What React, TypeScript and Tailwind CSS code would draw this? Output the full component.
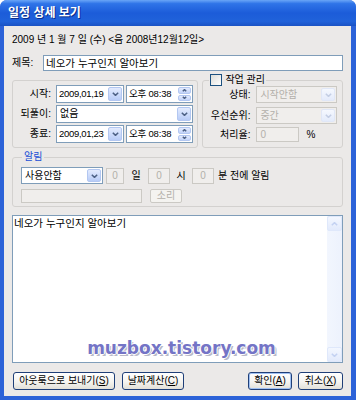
import React from "react";

// XP 스타일 일정 상세 보기 대화상자

function Chevron({ up = false, color = "#4d6185", w = 7, h = 4 }: { up?: boolean; color?: string; w?: number; h?: number }) {
  const pts = up
    ? `0.8,${h - 0.8} ${w / 2},0.6 ${w - 0.8},${h - 0.8}`
    : `0.8,0.8 ${w / 2},${h - 0.6} ${w - 0.8},0.8`;
  return (
    <svg width={w} height={h} viewBox={`0 0 ${w} ${h}`}>
      <polyline points={pts} fill="none" stroke={color} strokeWidth="1.5" />
    </svg>
  );
}

function DropBtn({ disabled = false }: { disabled?: boolean }) {
  return (
    <div
      className={
        disabled
          ? "m-[1px] flex w-[14px] items-center justify-center rounded-[2px] border border-[#e0e7f7] bg-gradient-to-b from-[#f5f8fe] to-[#e4ebfb]"
          : "m-[1px] flex w-[14px] items-center justify-center rounded-[2px] border border-[#b3c7f1] bg-gradient-to-b from-[#e3ebfe] to-[#b8ccf7]"
      }
    >
      <Chevron color={disabled ? "#c4cee4" : "#4d6185"} />
    </div>
  );
}

function Spin() {
  return (
    <div className="m-[1px] flex w-[13px] flex-col gap-[1px]">
      <div className="flex flex-1 items-center justify-center rounded-[2px] border border-[#b3c7f1] bg-gradient-to-b from-[#e3ebfe] to-[#c2d3f8]">
        <Chevron up w={5} h={3} />
      </div>
      <div className="flex flex-1 items-center justify-center rounded-[2px] border border-[#b3c7f1] bg-gradient-to-b from-[#e3ebfe] to-[#c2d3f8]">
        <Chevron w={5} h={3} />
      </div>
    </div>
  );
}

function Combo({ text, w, disabled = false, num = false }: { text: string; w: string; disabled?: boolean; num?: boolean }) {
  return (
    <div
      className={
        disabled
          ? `flex h-full border border-[#cbc9c4] bg-[#f0eeec] ${w}`
          : `flex h-full border border-[#7f9db9] bg-white ${w}`
      }
    >
      <div
        className={
          disabled
            ? "flex flex-1 items-center pl-[3px] text-[#b3b0aa]"
            : num
              ? "flex flex-1 items-center pl-[2px] text-[9.5px] tracking-[-0.3px]"
              : "flex flex-1 items-center pl-[3px]"
        }
      >
        {text}
      </div>
      <DropBtn disabled={disabled} />
    </div>
  );
}

function TimeBox({ text }: { text: string }) {
  return (
    <div className="ml-[2px] flex h-full w-[67px] border border-[#7f9db9] bg-white">
      <div className="flex flex-1 items-center pl-[2px] text-[9.5px] tracking-[-0.2px]">{text}</div>
      <Spin />
    </div>
  );
}

function OffBox({ w, text = "" }: { w: string; text?: string }) {
  return (
    <div className={`flex h-full items-center justify-center border border-[#cbc9c4] bg-[#f0eeec] text-[#b3b0aa] ${w}`}>{text}</div>
  );
}

function XPButton({ children, w, def = false }: { children: React.ReactNode; w: string; def?: boolean }) {
  return (
    <div
      className={
        def
          ? `flex h-full items-center justify-center rounded-[3px] border border-[#1f3f78] bg-[linear-gradient(180deg,#ffffff_0%,#f5f4f0_55%,#e2e0d8_100%)] shadow-[inset_0_0_0_1px_#9fc0f2] ${w}`
          : `flex h-full items-center justify-center rounded-[3px] border border-[#1f3f78] bg-[linear-gradient(180deg,#ffffff_0%,#f5f4f0_55%,#e2e0d8_100%)] ${w}`
      }
    >
      {children}
    </div>
  );
}

export default function App() {
  return (
    <div className="flex h-[400px] w-[356px] flex-col overflow-hidden rounded-t-[7px] bg-[#2c62d8] font-['Liberation_Sans','Noto_Sans_CJK_KR',sans-serif] text-[10px] leading-[12px] text-black">
      {/* 제목 표시줄 */}
      <div className="flex h-[26px] items-center bg-[linear-gradient(180deg,#6aa5f7_0%,#2f74e8_14%,#1c5cd9_50%,#2062da_82%,#1a52c4_100%)] pl-[8px] text-[12px] font-bold text-white [text-shadow:1px_1px_0_#0b2e8a]">
        일정 상세 보기
      </div>

      <div className="mb-[4px] ml-[4px] mr-[5px] flex flex-1 flex-col bg-[#ebe9e8] px-[8px] pt-[7px]">
        <div className="flex h-[14px] items-center">2009 년 1 월 7 일 (수) {"<음 2008년12월12일>"}</div>

        <div className="mt-[8px] flex h-[16px] items-center">
          <div className="w-[31px]">제목:</div>
          <div className="flex h-full flex-1 items-center border border-[#7f9db9] bg-white pl-[2px] text-[10.5px]">네오가 누구인지 알아보기</div>
        </div>

        <div className="mt-[3px] flex items-start gap-[4px]">
          <fieldset className="mt-[6px] w-[187px] rounded-[3px] border border-[#d3d1cf]">
            <div className="flex flex-col gap-[2px] pb-[4px] pr-[3px] pt-[4px]">
              <div className="flex h-[18px] items-center">
                <div className="w-[38px] text-right">시작:</div>
                <div className="ml-[5px] flex h-full">
                  <Combo text="2009,01,19" w="w-[68px]" num />
                  <TimeBox text="오후 08:38" />
                </div>
              </div>
              <div className="flex h-[18px] items-center">
                <div className="w-[38px] text-right">되풀이:</div>
                <div className="ml-[5px] flex h-full">
                  <Combo text="없음" w="w-[137px]" />
                </div>
              </div>
              <div className="flex h-[18px] items-center">
                <div className="w-[38px] text-right">종료:</div>
                <div className="ml-[5px] flex h-full">
                  <Combo text="2009,01,23" w="w-[68px]" num />
                  <TimeBox text="오후 08:38" />
                </div>
              </div>
            </div>
          </fieldset>

          <fieldset className="w-[141px] rounded-[3px] border border-[#d3d1cf]">
            <legend className="ml-[6px] flex h-[12px] items-center gap-[3px] px-[1px]">
              <span className="h-[12px] w-[12px] border border-[#1c5180] bg-gradient-to-br from-[#dcdcd7] to-white" />
              <span>작업 관리</span>
            </legend>
            <div className="flex flex-col pb-[5px]">
              <div className="flex h-[17px] items-center">
                <div className="w-[47px] text-right">상태:</div>
                <div className="ml-[6px] flex h-full">
                  <Combo text="시작안함" w="w-[81px]" disabled />
                </div>
              </div>
              <div className="mt-[4px] flex h-[17px] items-center">
                <div className="w-[47px] text-right">우선순위:</div>
                <div className="ml-[6px] flex h-full">
                  <Combo text="중간" w="w-[81px]" disabled />
                </div>
              </div>
              <div className="mt-[3px] flex h-[15px] items-center">
                <div className="w-[47px] text-right">처리율:</div>
                <div className="ml-[6px] flex h-full w-[43px] items-center border border-[#cbc9c4] bg-[#f0eeec] pl-[3px] text-[#b3b0aa]">0</div>
                <div className="ml-[7px]">%</div>
              </div>
            </div>
          </fieldset>
        </div>

        <fieldset className="mt-[3px] rounded-[3px] border border-[#d3d1cf]">
          <legend className="ml-[9px] h-[12px] px-[2px] text-[#1a4fd6]">알림</legend>
          <div className="flex flex-col pb-[3px] pl-[8px] pt-[4px]">
            <div className="flex h-[17px] items-center">
              <Combo text="사용안함" w="w-[82px]" />
              <div className="ml-[3px] flex h-[16px]">
                <OffBox w="w-[18px]" text="0" />
              </div>
              <div className="w-[24px] text-center">일</div>
              <div className="flex h-[16px]">
                <OffBox w="w-[22px]" text="0" />
              </div>
              <div className="w-[22px] text-center">시</div>
              <div className="flex h-[16px]">
                <OffBox w="w-[22px]" text="0" />
              </div>
              <div className="ml-[4px]">분 전에 알림</div>
            </div>
            <div className="mt-[5px] flex h-[14px] items-center">
              <OffBox w="w-[121px]" />
              <div className="ml-[8px] flex h-full w-[32px] items-center justify-center rounded-[2px] border border-[#cbc9c4] bg-[#f4f3f0] text-[#b3b0aa]">
                소리
              </div>
            </div>
          </div>
        </fieldset>

        <div className="relative mt-[8px] flex h-[148px] border border-[#7f9db9] bg-white">
          <div className="flex-1 pl-[1px] pt-[1px] text-[10.5px]">네오가 누구인지 알아보기</div>
          <div className="flex w-[15px] flex-col justify-between bg-gradient-to-r from-[#f2f6fe] to-[#edf2fd]">
            <div className="flex h-[15px] items-center justify-center rounded-[2px] border border-[#dfe8fb] bg-gradient-to-b from-[#f3f7ff] to-[#e2eafc]">
              <Chevron up color="#c4d2f2" />
            </div>
            <div className="flex h-[15px] items-center justify-center rounded-[2px] border border-[#dfe8fb] bg-gradient-to-b from-[#f3f7ff] to-[#e2eafc]">
              <Chevron color="#c4d2f2" />
            </div>
          </div>
          <div className="absolute inset-x-0 bottom-[5px] pl-[8px] text-center font-['DejaVu_Sans',sans-serif] text-[17px] font-bold leading-[18px] text-[#7474c6] [text-shadow:1px_0_0_#fff,-1px_0_0_#fff,0_1px_0_#fff,0_-1px_0_#fff,2px_2px_0_#b9b9c8]">
            muzbox.tistory.com
          </div>
        </div>

        <div className="mt-[9px] flex h-[18px]">
          <div className="ml-[1px] flex h-full">
            <XPButton w="w-[102px]">
              아웃룩으로 보내기(<span className="underline">S</span>)
            </XPButton>
          </div>
          <div className="ml-[7px] flex h-full">
            <XPButton w="w-[62px]">
              날짜계산(<span className="underline">C</span>)
            </XPButton>
          </div>
          <div className="flex-1" />
          <XPButton w="w-[44px]" def>
            확인(<span className="underline">A</span>)
          </XPButton>
          <div className="ml-[6px] flex h-full">
            <XPButton w="w-[45px]">
              취소(<span className="underline">X</span>)
            </XPButton>
          </div>
        </div>
      </div>
    </div>
  );
}
